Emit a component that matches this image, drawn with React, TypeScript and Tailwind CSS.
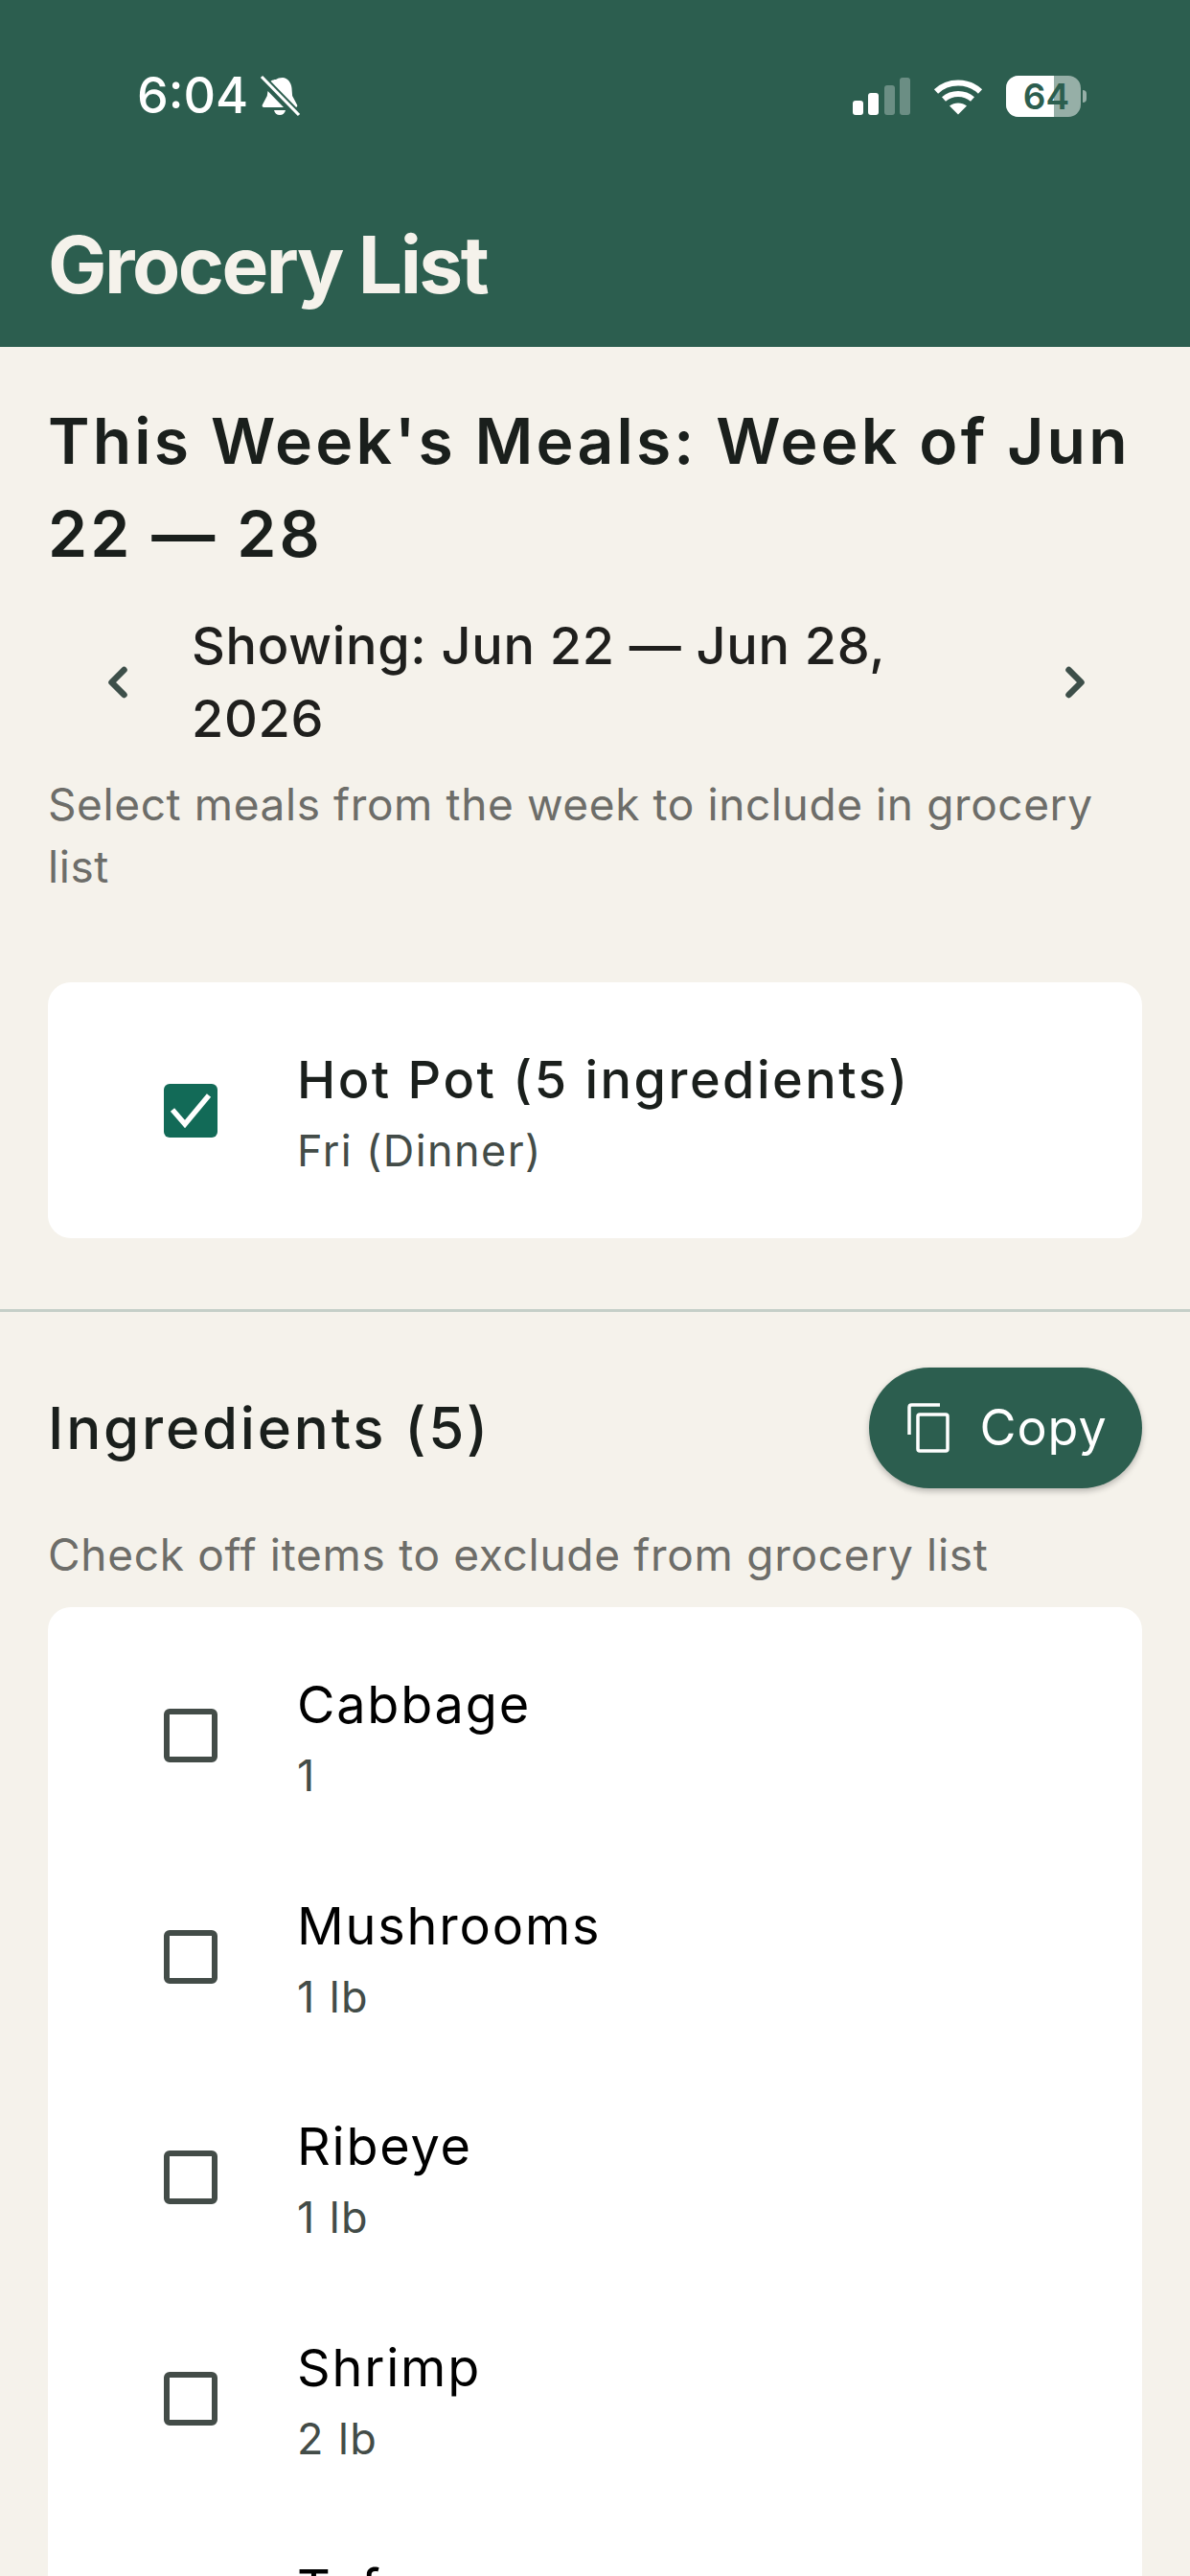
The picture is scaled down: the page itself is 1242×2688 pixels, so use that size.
import React from 'react';
import { ChevronLeft, ChevronRight } from 'lucide-react';

const BellOff = () => (
  <svg width="44" height="44" viewBox="0 0 44 44" className="ml-[12px]">
    <path d="M24 3c5 0 9 5 9.500 11l.6 8 5 9.500c.6 1.300-.2 2.500-1.600 2.500H32L9 11.500C10 7 13 5 17 5c1.500-1.300 4-2 7-2z" fill="#fff" />
    <path d="M8.500 17 7.800 22l-5 9.500C2.200 33 3 34 4.500 34H25z" fill="#fff" />
    <path d="M15 37h12c-.6 3-3 5-6 5s-5.400-2-6-5z" fill="#fff" />
    <path d="M2 2l39 40" stroke="#2c5e4f" strokeWidth="7" />
    <path d="M2 2l39 40" stroke="#fff" strokeWidth="3.200" />
  </svg>
);

const Signal = () => (
  <svg width="60" height="39" viewBox="0 0 60 39">
    <rect x="0" y="24" width="11" height="15" rx="3" fill="#fff" />
    <rect x="16" y="16" width="11" height="23" rx="3" fill="#fff" />
    <rect x="33" y="8" width="11" height="31" rx="3" fill="#fff" fillOpacity="0.3" />
    <rect x="49" y="0" width="11" height="39" rx="3" fill="#fff" fillOpacity="0.3" />
  </svg>
);

const Wifi = () => (
  <svg width="52" height="38" viewBox="0 0 52 38" fill="none" stroke="#fff" strokeWidth="6">
    <path d="M3 13.500C15.500 1.500 36.500 1.500 49 13.500" />
    <path d="M11 21.500c8.500-7.500 21.500-7.500 30 0" />
    <path d="M26 37.500 17 28.500c5-4 13-4 18 0z" fill="#fff" stroke="none" />
  </svg>
);

const Battery = () => (
  <div className="flex items-center">
    <div className="relative flex h-[43px] w-[78px] items-center justify-center overflow-hidden rounded-[13px] bg-white/50">
      <div className="absolute inset-y-0 left-0 w-[50px] bg-white" />
      <span className="relative ml-[6px] text-[37px] font-semibold leading-none text-[#2c5e4f]">64</span>
    </div>
    <div className="ml-[2px] h-[13px] w-[4px] rounded-r-full bg-white/50" />
  </div>
);

const CopyIcon = () => (
  <svg width="46" height="52" viewBox="0 0 46 52" fill="none" stroke="#fff" strokeWidth="3.500">
    <path d="M2 33V4.500C2 3 3 2 4.500 2H34" />
    <rect x="11" y="12" width="31" height="38" rx="2" />
  </svg>
);

const Check = ({ checked = false }: { checked?: boolean }) =>
  checked ? (
    <div className="ml-[121px] flex h-[56px] w-[56px] shrink-0 items-center justify-center rounded-[6px] bg-[#126a57]">
      <svg width="44" height="38" viewBox="0 0 44 38" fill="none" stroke="#fff" strokeWidth="5.500">
        <path d="M3 18l13 15L41 3" />
      </svg>
    </div>
  ) : (
    <div className="ml-[121px] h-[56px] w-[56px] shrink-0 rounded-[6px] border-[6px] border-[#434c48]" />
  );

const items = [
  { name: 'Cabbage', qty: '1' },
  { name: 'Mushrooms', qty: '1 lb' },
  { name: 'Ribeye', qty: '1 lb' },
  { name: 'Shrimp', qty: '2 lb' },
  { name: 'Tofu', qty: '1' },
];

export default function App() {
  return (
    <div className="h-[2688px] w-[1242px] overflow-hidden bg-[#f5f2eb] font-['Inter',sans-serif]">
      <div className="h-[362px] bg-[#2c5e4f] pl-[50px] pr-[108px]">
        <div className="flex h-[227px] items-start justify-between pl-[93px] pt-[78px]">
          <div className="flex items-center text-white">
            <span className="text-[52px] font-medium leading-[44px]">6:04</span>
            <BellOff />
          </div>
          <div className="flex items-center gap-[24px] pt-[1px]">
            <Signal />
            <Wifi />
            <Battery />
          </div>
        </div>
        <h1 className="text-[82px] font-bold leading-[100px] tracking-[-2.500px] text-[#f5f2eb]">Grocery List</h1>
      </div>

      <div className="px-[50px] pt-[50px]">
        <h2 className="text-[66px] font-semibold leading-[97px] tracking-[3.150px] text-[#1a1f1c]">This Week's Meals: Week of Jun 22 — 28</h2>
        <div className="mt-[30px] flex items-center">
          <ChevronLeft size={52} strokeWidth={3} className="ml-[47px] shrink-0 text-[#3d4f49]" />
          <div className="ml-[51px] w-[800px] text-[54px] font-medium leading-[76px] tracking-[.7px] text-[#1f1f1d]">Showing: Jun 22 — Jun 28, 2026</div>
          <ChevronRight size={52} strokeWidth={3} className="ml-[96px] shrink-0 text-[#3d4f49]" />
        </div>
        <p className="mt-[19px] text-[46px] leading-[65px] tracking-[.6px] text-[#6d6d69]">Select meals from the week to include in grocery list</p>

        <div className="mt-[88px] flex h-[267px] items-center rounded-[24px] bg-white">
          <Check checked />
          <div className="ml-[83px] pt-[6px]">
            <div className="text-[54px] font-medium leading-[70px] tracking-[2.500px] text-[#1a1f1c]">Hot Pot (5 ingredients)</div>
            <div className="mt-[8px] text-[45px] leading-[62px] tracking-[1.400px] text-[#434c48]">Fri (Dinner)</div>
          </div>
        </div>
      </div>

      <div className="mt-[74px] h-[3px] bg-[#c5cfc8]" />

      <div className="px-[50px]">
        <div className="mt-[58px] flex h-[126px] items-center justify-between">
          <h3 className="text-[60px] font-medium tracking-[2.800px] text-[#1a1f1c]">Ingredients (5)</h3>
          <button className="flex h-[126px] w-[285px] items-center justify-center gap-[29px] rounded-full bg-[#2c5e4f] pl-[4px] text-[52px] tracking-[1px] text-white shadow-[0_3px_6px_rgba(0,0,0,0.25)]">
            <CopyIcon />
            Copy
          </button>
        </div>
        <p className="mt-[36px] text-[46px] leading-[66px] tracking-[.7px] text-[#6d6d69]">Check off items to exclude from grocery list</p>

        <div className="mt-[22px] rounded-[24px] bg-white pt-[19px]">
          {items.map((item) => (
            <div key={item.name} className="flex h-[230.500px] items-center">
              <Check />
              <div className="ml-[83px] pt-[6px]">
                <div className="text-[54px] leading-[70px] tracking-[1.800px] text-black">{item.name}</div>
                <div className="mt-[8px] text-[45px] leading-[62px] tracking-[1.400px] text-[#434c48]">{item.qty}</div>
              </div>
            </div>
          ))}
        </div>
      </div>
    </div>
  );
}
